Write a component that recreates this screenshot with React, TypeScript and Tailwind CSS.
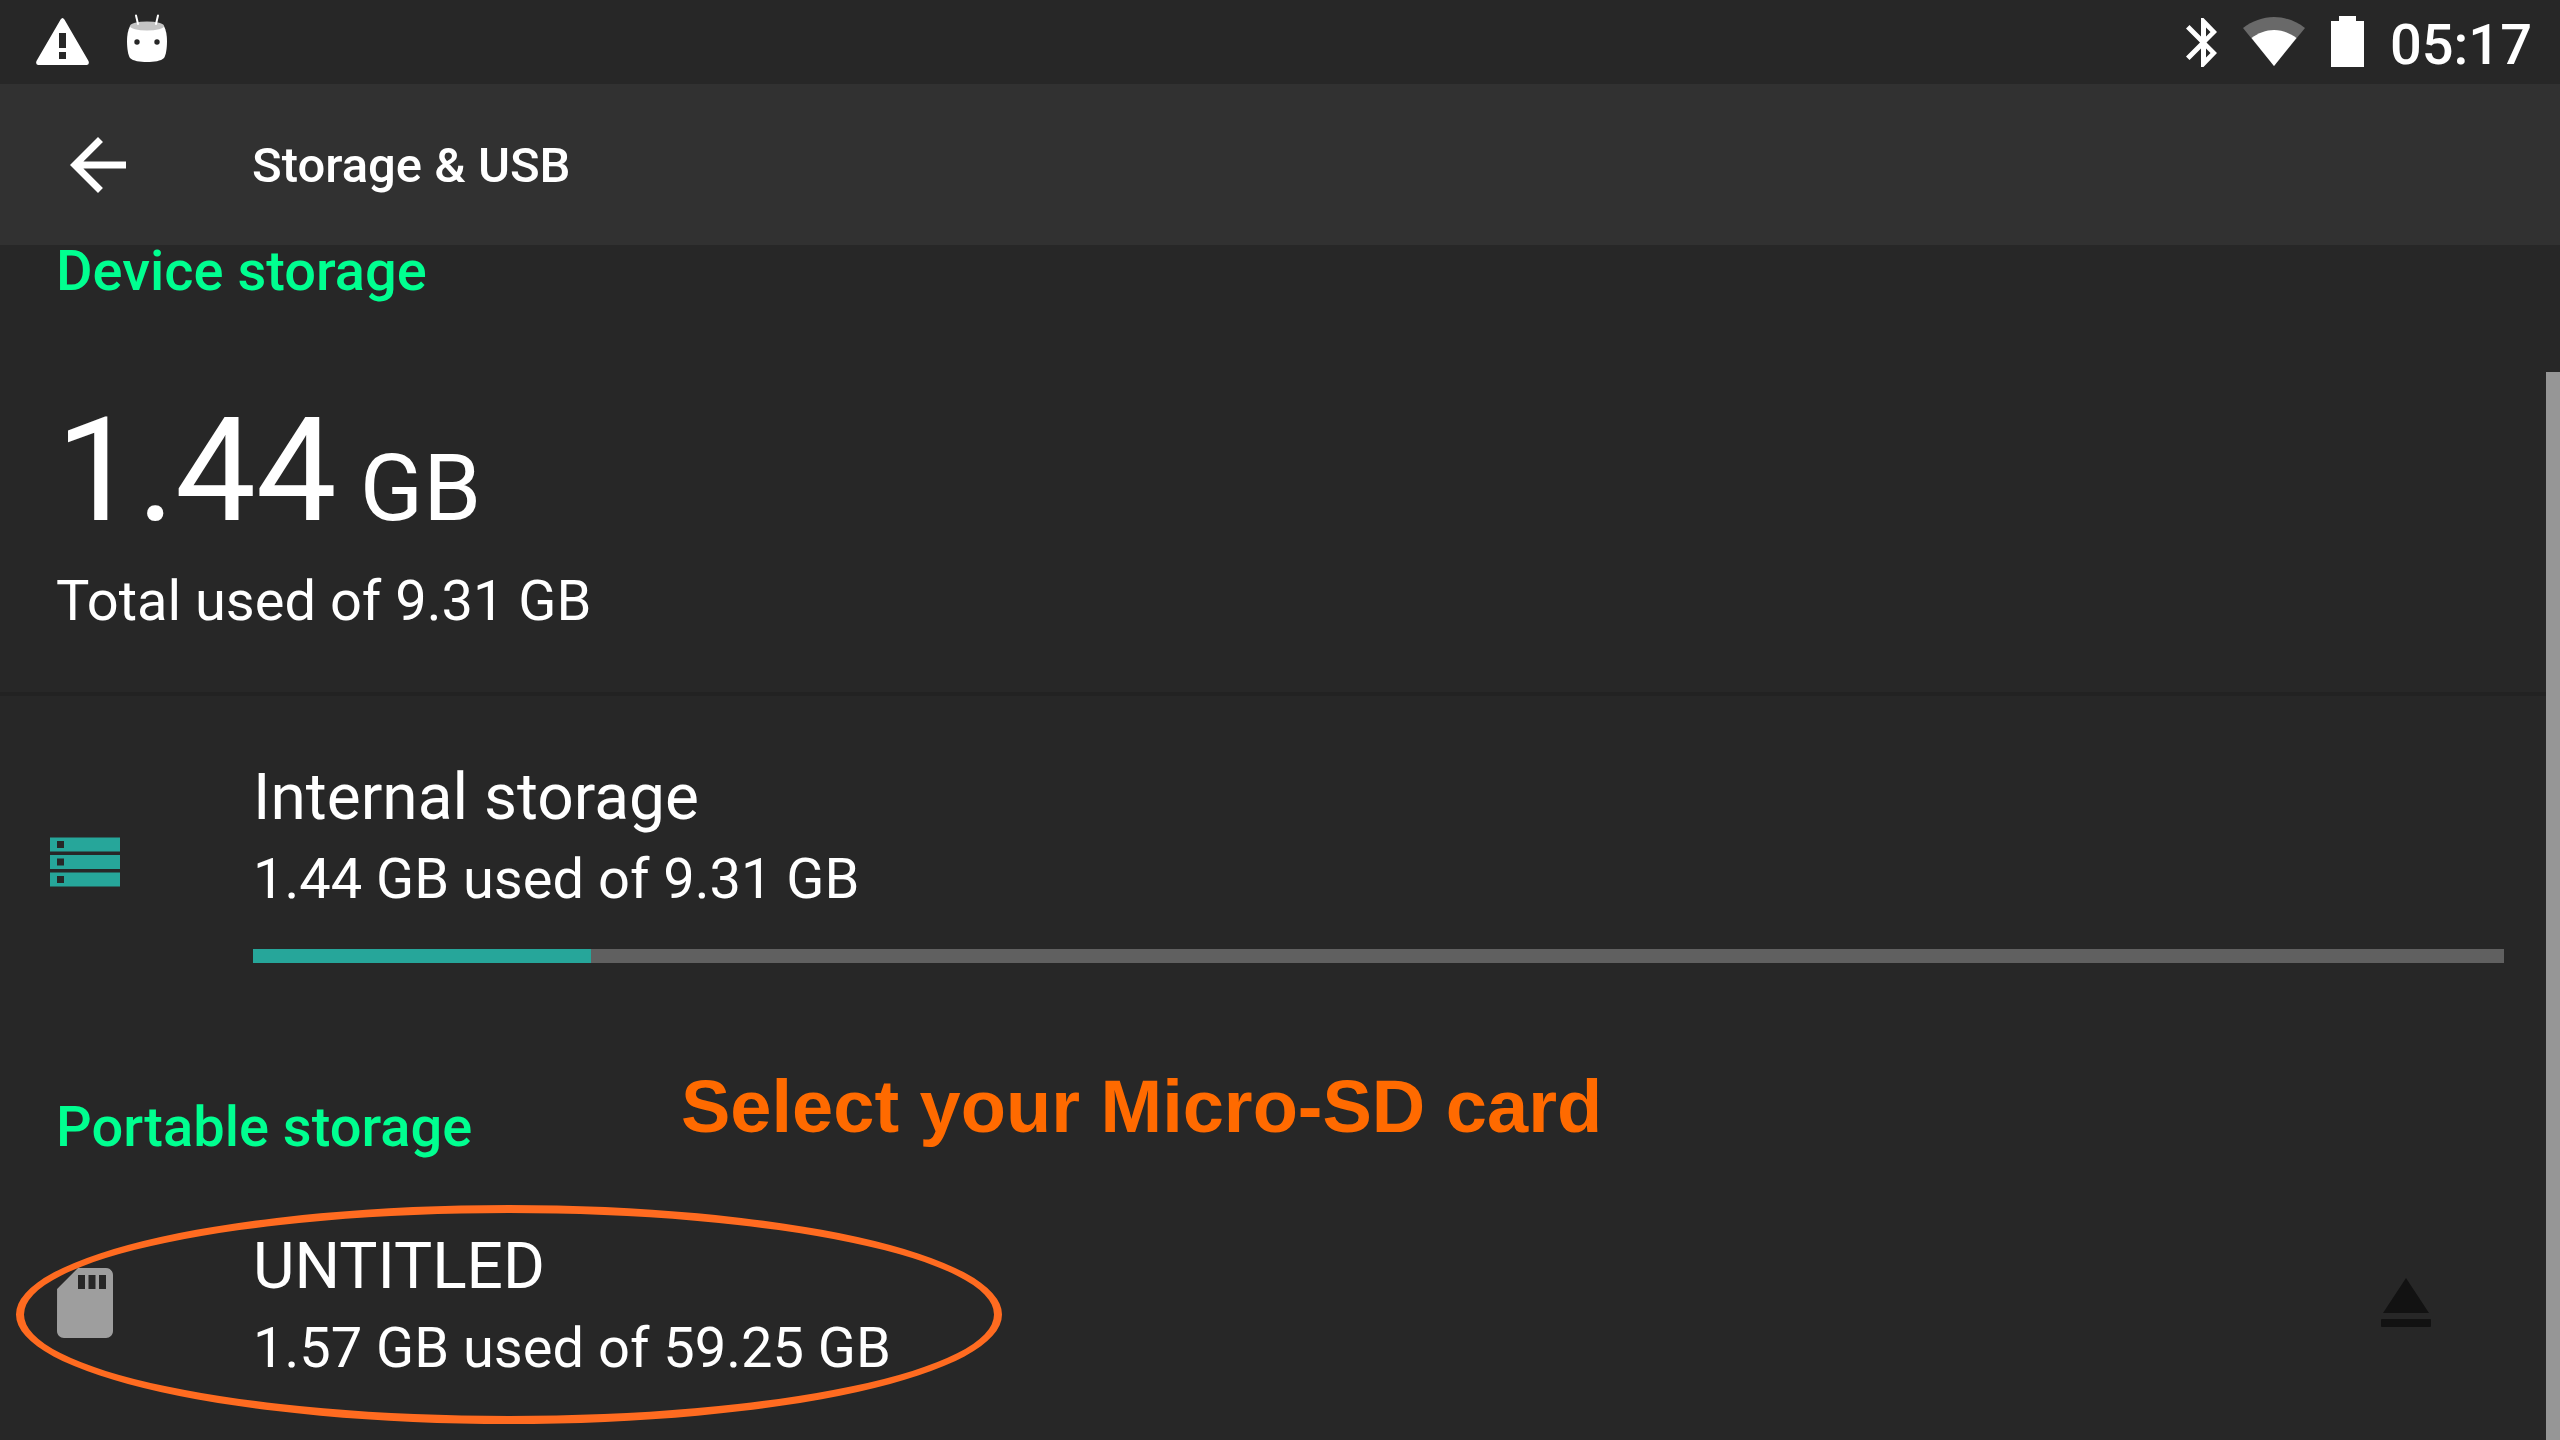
import React from "react";

function StatusBar() {
  return (
    <div className="flex h-[84px] items-start justify-between bg-[#272727] pl-9 pr-7">
      <div className="flex items-start">
        <svg className="mt-[18px] h-[47px] w-[53px]" viewBox="0 0 53 47" aria-label="Warning">
          <path
            fill="#fff"
            fillRule="evenodd"
            d="M2 47Q-.7 46.500 .5 43L24.600 1.500Q26.500-1.500 28.400 1.500L52.500 43Q53.700 46.500 51 47ZM23 15H30V30H23ZM23 34H30V41H23Z"
          />
        </svg>
        <svg className="ml-[38px] mt-[14px] h-[48px] w-[40px]" viewBox="0 0 40 48" aria-label="Android">
          <path
            fill="#fff"
            d="M3 12H37C39 16 40 21 40 27C40 34 39 41 37 44C34 47 27 48 20 48S6 47 3 44C1 41 0 34 0 27C0 21 1 16 3 12Z"
          />
          <ellipse cx="20" cy="12" rx="17" ry="4.500" fill="#c4c4c4" />
          <path d="M9 1.500L11 10M31 1.500L29 10" stroke="#fff" strokeWidth="2" strokeLinecap="round" />
          <circle cx="10" cy="28" r="2.700" fill="#272727" />
          <circle cx="30" cy="28" r="2.700" fill="#272727" />
        </svg>
      </div>
      <div className="flex items-start">
        <svg className="mt-[18px] h-[49px] w-[31px]" viewBox="0 0 31 49" aria-label="Bluetooth">
          <path
            fill="#fff"
            fillRule="evenodd"
            d="M15 0H17.500L31 14L20.500 24.500L31 35L17.500 49H15V30.500L3.500 42L0 38.500L14 24.500L0 10.500L3.500 7L15 18.500ZM20 9.500V18.500L24.500 14ZM20 30.500V39.500L24.500 35Z"
          />
        </svg>
        <svg className="ml-[26px] mt-[17px] h-[49px] w-[62px]" viewBox="0 0 62 49" aria-label="Wi-Fi">
          <path fill="#696969" d="M31 49L0 11C9 4 20 0 31 0S53 4 62 11Z" />
          <path fill="#fff" d="M31 49L8.500 21C15 16 23 13 31 13S47 16 53.500 21Z" />
        </svg>
        <svg className="ml-[26px] mt-[16px] h-[51px] w-[33px]" viewBox="0 0 33 51" aria-label="Battery">
          <path fill="#fff" d="M8 0H25V5H33V51H0V5H8Z" />
        </svg>
        <time className="ml-[26px] mt-3 text-[56px] font-medium leading-[66px]">05:17</time>
      </div>
    </div>
  );
}

function AppBar() {
  return (
    <header className="flex h-[161px] items-center bg-[#313131] pl-14">
      <button type="button" aria-label="Back" className="mr-28">
        <svg className="h-[84px] w-[84px]" viewBox="0 0 24 24">
          <path fill="#fff" d="M20 11H7.830l5.590-5.590L12 4l-8 8 8 8 1.410-1.410L7.830 13H20z" />
        </svg>
      </button>
      <h1 className="pt-0.5 text-[49px] font-medium leading-[58px]">Storage &amp; USB</h1>
    </header>
  );
}

function VolumeText({ name, usage }: { name: string; usage: string }) {
  return (
    <span className="flex flex-1 flex-col gap-[10px] text-left">
      <span className="text-[64px] leading-[76px]">{name}</span>
      <span className="text-[56px] leading-[66px]">{usage}</span>
    </span>
  );
}

export default function App() {
  return (
    <div className="relative flex min-h-screen flex-col overflow-hidden bg-[#272727] font-[Roboto,sans-serif] text-white">
      <StatusBar />
      <AppBar />
      <main>
        <section>
          <h2 className="pl-14 text-[56px] font-medium leading-[52px] text-[#00ff90]">Device storage</h2>
          <div className="mt-[93px] border-b-4 border-[#222222] pb-[58px] pl-14">
            <p className="text-[144px] leading-[162px]">
              1.44<span className="text-[93px] leading-none"> GB</span>
            </p>
            <p className="mt-4 text-[56px] leading-[66px]">Total used of 9.31 GB</p>
          </div>
          <button type="button" className="flex w-full items-center pr-14 pt-16">
            <svg className="ml-[50px] mr-[133px] h-[50px] w-[70px]" viewBox="0 0 70 50">
              <path
                fill="#26a69a"
                fillRule="evenodd"
                d="M0 .5H70V14.500H0ZM0 18H70V32H0ZM0 35.500H70V49.500H0ZM7 4V11H14V4ZM7 21.500V28.500H14V21.500ZM7 39V46H14V39Z"
              />
            </svg>
            <span className="flex flex-1 flex-col gap-[37px]">
              <VolumeText name="Internal storage" usage="1.44 GB used of 9.31 GB" />
              <span className="block h-[14px] bg-[#606060]">
                <span className="block h-full w-[15%] bg-[#26a69a]" />
              </span>
            </span>
          </button>
        </section>
        <section>
          <div className="flex items-start pl-14 pt-[102px]">
            <h2 className="mt-[29px] w-[625px] text-[56px] font-medium leading-[66px] text-[#00ff90]">
              Portable storage
            </h2>
            <p className="font-['Liberation_Sans',sans-serif] text-[74px] font-bold leading-[84px] text-[#ff6a00]">
              Select your Micro-SD card
            </p>
          </div>
          <div className="mt-[45px] flex items-start justify-between pr-28">
            <button type="button" className="relative flex h-[219px] w-[1018px] items-start pt-6">
              <svg className="ml-[43px] mr-[126px] mt-8 h-[84px] w-[84px]" viewBox="0 0 24 24">
                <path
                  fill="#9e9e9e"
                  d="M18 2h-8L4.020 8 4 20c0 1.100.900 2 2 2h12c1.100 0 2-.900 2-2V4c0-1.100-.900-2-2-2zm-6 6h-2V4h2v4zm3 0h-2V4h2v4zm3 0h-2V4h2v4z"
                />
              </svg>
              <VolumeText name="UNTITLED" usage="1.57 GB used of 59.25 GB" />
              <span className="absolute inset-x-4 inset-y-0 rounded-[50%] border-8 border-[#ff6b20]" />
            </button>
            <button type="button" aria-label="Eject" className="mt-14 p-[17px]">
              <svg className="h-[49px] w-[50px]" viewBox="0 0 50 49">
                <path fill="#121212" d="M25 0L48 35H2ZM1 41H49Q50 41 50 42V48Q50 49 49 49H1Q0 49 0 48V42Q0 41 1 41Z" />
              </svg>
            </button>
          </div>
        </section>
      </main>
      <div className="absolute bottom-0 right-0 top-[372px] w-[14px] bg-[#969696]" />
    </div>
  );
}
